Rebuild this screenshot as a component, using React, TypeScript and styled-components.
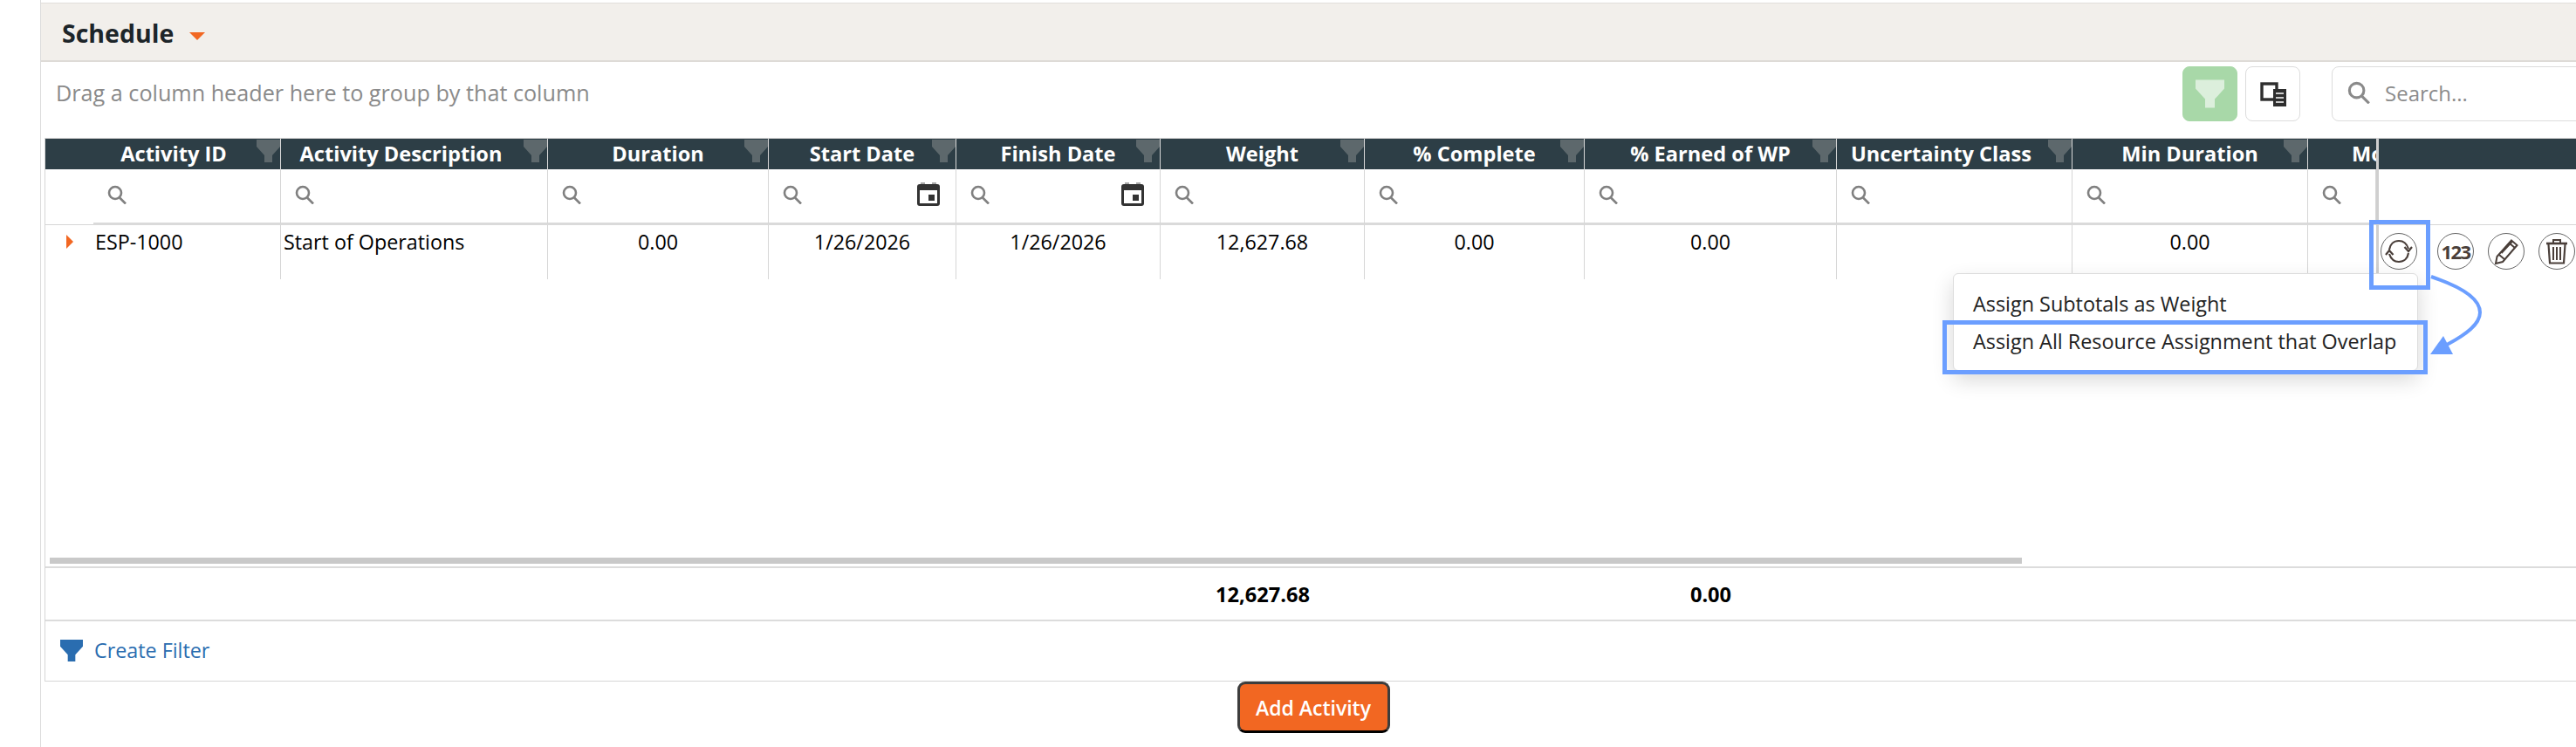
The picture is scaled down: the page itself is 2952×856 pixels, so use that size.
import React from 'react';
import styled, { createGlobalStyle } from 'styled-components';

const Global = createGlobalStyle`
  * { box-sizing: border-box; }
  html, body { margin: 0; padding: 0; background: #fff; }
  body { font-family: "Open Sans", "Liberation Sans", sans-serif; color: #000; overflow: hidden; }
`;

const Page = styled.div`
  width: 2952px;
  height: 856px;
  padding-left: 46px;
  overflow: hidden;
`;
const Panel = styled.main`
  position: relative;
  height: 856px;
  padding-top: 3px;
  border-left: 1px solid #dcdcdc;
`;
const TitleBar = styled.header`
  height: 68px;
  display: flex;
  align-items: center;
  gap: 18px;
  padding: 2px 24px 0;
  background: #f2efeb;
  border-top: 1px solid #e2dfdb;
  border-bottom: 2px solid #dedbd7;
`;
const Title = styled.h1`
  margin: 0;
  font-size: 28.5px;
  font-weight: 700;
  color: #1d2529;
`;
const Caret = styled.span`
  width: 0;
  height: 0;
  margin-top: 8px;
  border-left: 9px solid transparent;
  border-right: 9px solid transparent;
  border-top: 9px solid #f26722;
`;
const Toolbar = styled.div`
  height: 87px;
  display: flex;
  align-items: flex-start;
  padding: 5px 0 0 17px;
`;
const GroupHint = styled.div`
  flex: 1;
  height: 63px;
  line-height: 60px;
  font-size: 25.2px;
  color: #8a8a8a;
`;
const ToolButton = styled.button<{ $active?: boolean }>`
  width: 63px;
  height: 63px;
  margin-right: 9px;
  padding: 0;
  display: flex;
  align-items: center;
  justify-content: center;
  border-radius: 8px;
  background: ${p => (p.$active ? '#a8d8a8' : '#fff')};
  border: 1px solid ${p => (p.$active ? '#a8d8a8' : '#dcdcdc')};
`;
const SearchBox = styled.div`
  width: 300px;
  height: 63px;
  margin: 0 -20px 0 27px;
  padding: 0 0 3px 17px;
  display: flex;
  align-items: center;
  gap: 17px;
  border: 1px solid #dcdcdc;
  border-radius: 8px;
  font-size: 24px;
  color: #8c8c8c;
`;
const Grid = styled.section`
  margin-left: 4px;
  border-left: 1px solid #d6d6d6;
  border-bottom: 1px solid #d6d6d6;
`;
const GridBody = styled.div`
  height: 493px;
  display: flex;
  flex-direction: column;
  border-bottom: 2px solid #dcdcdc;
`;
const HeadRow = styled.div`
  height: 36px;
  display: flex;
  background: #2d3e46;
  border-top: 1px solid #d0d0d0;
`;
const HeadCell = styled.div<{ $w: number; $before?: number; $after?: number }>`
  position: relative;
  flex: 0 0 ${p => p.$w}px;
  overflow: hidden;
  padding: 0 ${p => p.$after ?? 0}px 0 ${p => p.$before ?? 0}px;
  border-right: 1px solid #d8d8d8;
  font-size: 23.6px;
  font-weight: 700;
  line-height: 34px;
  text-align: center;
  white-space: nowrap;
  color: #fff;
`;
const TruncatedHead = styled(HeadCell)`
  text-align: left;
  border-right: none;
  overflow: hidden;
`;
const ActionHead = styled.div`
  flex: 1;
  border-left: 3px solid #cfcfcf;
`;
const HeadFunnel = styled.svg`
  position: absolute;
  top: 1px;
  right: 0;
  width: 27px;
  height: 26px;
`;
const FilterRow = styled.div`
  height: 64px;
  display: flex;
`;
const ExpandSpacer = styled.div`
  flex: 0 0 55px;
  border-bottom: 1px solid #d6d6d6;
`;
const FilterCell = styled.div<{ $w: number }>`
  flex: 0 0 ${p => p.$w}px;
  display: flex;
  align-items: center;
  justify-content: space-between;
  padding: 0 18px 4px 16px;
  border-right: 1px solid #d6d6d6;
  border-bottom: 3px solid #dadada;
`;
const ActionFilter = styled.div`
  flex: 1;
  border-left: 3px solid #cfcfcf;
  border-bottom: 1px solid #d6d6d6;
`;
const DataRow = styled.div`
  height: 62px;
  display: flex;
`;
const ExpandCell = styled.div`
  flex: 0 0 54px;
  padding: 11px 0 0 24px;
`;
const ExpandArrow = styled.span`
  display: block;
  width: 0;
  height: 0;
  border-top: 8px solid transparent;
  border-bottom: 8px solid transparent;
  border-left: 8px solid #f26722;
`;
const DataCell = styled.div<{ $w: number; $left?: boolean; $plain?: boolean }>`
  flex: 0 0 ${p => p.$w}px;
  padding: 0 3px;
  overflow: hidden;
  font-size: 23.3px;
  line-height: 39px;
  white-space: nowrap;
  text-align: ${p => (p.$left ? 'left' : 'center')};
  border-right: ${p => (p.$plain ? 'none' : '1px solid #d6d6d6')};
`;
const ActionCell = styled.div`
  flex: 1;
  display: flex;
  gap: 16px;
  padding: 9px 0 0 2px;
  border-left: 3px solid #cfcfcf;
`;
const RoundIcon = styled.button`
  flex: 0 0 42px;
  width: 42px;
  height: 42px;
  padding: 0;
  display: flex;
  align-items: center;
  justify-content: center;
  border: 1.5px solid #666;
  border-radius: 50%;
  background: #fff;
  font-family: "Open Sans", sans-serif;
  font-size: 22px;
  font-weight: 700;
  letter-spacing: -1.5px;
  color: #4a3f3a;
  &:first-child {
    margin-right: 7px;
  }
`;
const Filler = styled.div`
  flex: 1;
`;
const ScrollBar = styled.div`
  width: 2260px;
  height: 7px;
  margin: 0 0 3px 5px;
  background: #c9c9c9;
`;
const TotalsRow = styled.div`
  height: 61px;
  display: flex;
  border-bottom: 2px solid #dcdcdc;
`;
const TotalCell = styled.div<{ $w: number }>`
  flex: 0 0 ${p => p.$w}px;
  font-size: 23.6px;
  font-weight: 700;
  line-height: 60px;
  text-align: center;
`;
const FilterBar = styled.div`
  height: 68px;
  display: flex;
  align-items: center;
  gap: 13px;
  padding: 0 0 2px 17px;
`;
const FilterLink = styled.a`
  font-size: 23.3px;
  color: #2a6db0;
`;
const AddRow = styled.div`
  display: flex;
  justify-content: center;
  padding-left: 11px;
`;
const AddButton = styled.button`
  width: 175px;
  height: 59px;
  padding: 0;
  background: #f26722;
  border: 3px solid #3d3d3d;
  border-bottom-color: #000;
  border-radius: 9px;
  font-family: "Open Sans", sans-serif;
  font-size: 23px;
  font-weight: 600;
  color: #fff;
`;
const Menu = styled.div`
  position: absolute;
  left: 2191px;
  top: 313px;
  width: 533px;
  height: 112px;
  padding-top: 13px;
  background: #fff;
  border: 1px solid #ddd;
  border-radius: 6px;
  box-shadow: 0 10px 24px rgba(0, 0, 0, 0.16);
`;
const MenuItem = styled.div`
  height: 43px;
  padding-left: 22px;
  font-size: 23.4px;
  line-height: 42px;
  white-space: nowrap;
  color: #222;
`;
const Highlight = styled.div<{ $l: number; $t: number; $w: number; $h: number }>`
  position: absolute;
  left: ${p => p.$l}px;
  top: ${p => p.$t}px;
  width: ${p => p.$w}px;
  height: ${p => p.$h}px;
  border: 5px solid #6b9eff;
`;
const Callout = styled.svg`
  position: absolute;
  left: 2720px;
  top: 300px;
  width: 120px;
  height: 120px;
  overflow: visible;
`;

const columns = [
  { title: 'Activity ID', w: 270, before: 55, after: 30, value: 'ESP-1000' },
  { title: 'Activity Description', w: 306, after: 30, value: 'Start of Operations', left: true },
  { title: 'Duration', w: 253, value: '0.00' },
  { title: 'Start Date', w: 215, value: '1/26/2026', date: true },
  { title: 'Finish Date', w: 234, value: '1/26/2026', date: true },
  { title: 'Weight', w: 234, value: '12,627.68', total: '12,627.68' },
  { title: '% Complete', w: 252, value: '0.00' },
  { title: '% Earned of WP', w: 289, value: '0.00', total: '0.00' },
  { title: 'Uncertainty Class', w: 270, after: 30, value: '' },
  { title: 'Min Duration', w: 270, value: '0.00' },
];

const Funnel = ({ color, ...rest }: { color: string } & React.SVGProps<SVGSVGElement>) => (
  <svg viewBox="0 0 27 26" {...(rest as object)}>
    <path d="M0 0H27V8L18 18V26H9V18L0 8Z" fill={color} />
  </svg>
);

const Magnifier = ({ size = 22, color = '#808080' }: { size?: number; color?: string }) => (
  <svg width={size} height={size} viewBox="0 0 22 22" fill="none" stroke={color} strokeWidth="2.6">
    <circle cx="9" cy="9" r="7" />
    <path d="M14 14.5L21 21.5" />
  </svg>
);

const CalendarIcon = () => (
  <svg width="26" height="27" viewBox="0 0 26 27">
    <path d="M4 1H9M17 1H22" stroke="#555" strokeWidth="1" />
    <rect y="2" width="26" height="25" rx="3" fill="#333" />
    <rect x="3" y="9" width="20" height="15" fill="#fff" />
    <rect x="13" y="14" width="7" height="7" fill="#333" />
  </svg>
);

const ColumnsIcon = () => (
  <svg width="30" height="28" viewBox="0 0 30 28">
    <rect x="2" y="2" width="17" height="18" fill="none" stroke="#2e2e2e" strokeWidth="3.4" />
    <rect x="15" y="8" width="15" height="20" fill="#2e2e2e" />
    <path d="M18 13H27M18 18H27M18 23H27" stroke="#fff" strokeWidth="1.6" />
  </svg>
);

const RefreshIcon = () => (
  <svg width="32" height="28" viewBox="0 0 32 28" fill="none" stroke="#4a3f3a" strokeWidth="2.2">
    <path d="M5 12C6 6 10 2 16 2C21 2 25 5 27 11" />
    <path d="M27 16C26 22 22 26 16 26C11 26 7 23 5 17" />
    <path d="M22.5 9L27 14L31 9" />
    <path d="M1 18L5 13L9.5 18" />
  </svg>
);

const PencilIcon = () => (
  <svg width="30" height="30" viewBox="0 0 30 30" fill="none" stroke="#4a3f3a" strokeWidth="2">
    <path d="M21 2.5L27.5 8L11 27L3 29L4.5 21Z" />
    <path d="M7 19L13.5 24.5M18.5 5.5L25 11M9.5 17L22 3.5" />
  </svg>
);

const TrashIcon = () => (
  <svg width="26" height="30" viewBox="0 0 26 30" fill="none" stroke="#4a3f3a" strokeWidth="2">
    <path d="M1 6H25" strokeWidth="2.6" />
    <path d="M9 6V2H17V6" />
    <path d="M3.5 7L5 28.5H21L22.5 7" strokeWidth="2.2" />
    <path d="M9 10V25M13 10V25M17 10V25" />
  </svg>
);

const App = () => (
  <Page>
    <Global />
    <Panel>
      <TitleBar>
        <Title>Schedule</Title>
        <Caret />
      </TitleBar>
      <Toolbar>
        <GroupHint>Drag a column header here to group by that column</GroupHint>
        <ToolButton $active aria-label="Filter">
          <Funnel color="#dcefdc" width="33" height="33" />
        </ToolButton>
        <ToolButton aria-label="Columns">
          <ColumnsIcon />
        </ToolButton>
        <SearchBox>
          <Magnifier size={26} color="#8a8a8a" />
          Search...
        </SearchBox>
      </Toolbar>
      <Grid>
        <GridBody>
          <HeadRow>
            {columns.map(c => (
              <HeadCell key={c.title} $w={c.w} $before={c.before} $after={c.after}>
                {c.title}
                <HeadFunnel as={Funnel as never} color="#5d686c" />
              </HeadCell>
            ))}
            <TruncatedHead $w={78} $before={50}>Mo</TruncatedHead>
            <ActionHead />
          </HeadRow>
          <FilterRow>
            <ExpandSpacer />
            {columns.map((c, i) => (
              <FilterCell key={c.title} $w={i === 0 ? c.w - 55 : c.w}>
                <Magnifier />
                {c.date && <CalendarIcon />}
              </FilterCell>
            ))}
            <FilterCell $w={78}>
              <Magnifier />
            </FilterCell>
            <ActionFilter />
          </FilterRow>
          <DataRow>
            <ExpandCell>
              <ExpandArrow />
            </ExpandCell>
            {columns.map((c, i) => (
              <DataCell key={c.title} $w={i === 0 ? c.w - 54 : c.w} $left={i < 2}>
                {c.value}
              </DataCell>
            ))}
            <DataCell $w={78} $plain />
            <ActionCell>
              <RoundIcon aria-label="Refresh">
                <RefreshIcon />
              </RoundIcon>
              <RoundIcon>123</RoundIcon>
              <RoundIcon aria-label="Edit">
                <PencilIcon />
              </RoundIcon>
              <RoundIcon aria-label="Delete">
                <TrashIcon />
              </RoundIcon>
            </ActionCell>
          </DataRow>
          <Filler />
          <ScrollBar />
        </GridBody>
        <TotalsRow>
          {columns.map(c => (
            <TotalCell key={c.title} $w={c.w}>
              {c.total}
            </TotalCell>
          ))}
        </TotalsRow>
        <FilterBar>
          <Funnel color="#2a6db0" width="26" height="25" />
          <FilterLink>Create Filter</FilterLink>
        </FilterBar>
      </Grid>
      <AddRow>
        <AddButton>Add Activity</AddButton>
      </AddRow>
      <Menu>
        <MenuItem>Assign Subtotals as Weight</MenuItem>
        <MenuItem>Assign All Resource Assignment that Overlap</MenuItem>
      </Menu>
      <Highlight $l={2668} $t={252} $w={70} $h={80} />
      <Highlight $l={2179} $t={367} $w={556} $h={62} />
      <Callout viewBox="0 0 120 120">
        <path d="M19 17C52 28 75 42 75 58C75 72 58 84 37 95" fill="none" stroke="#6b9eff" strokeWidth="4" />
        <path d="M18 106L44 106L33 85Z" fill="#6b9eff" />
      </Callout>
    </Panel>
  </Page>
);

export default App;
